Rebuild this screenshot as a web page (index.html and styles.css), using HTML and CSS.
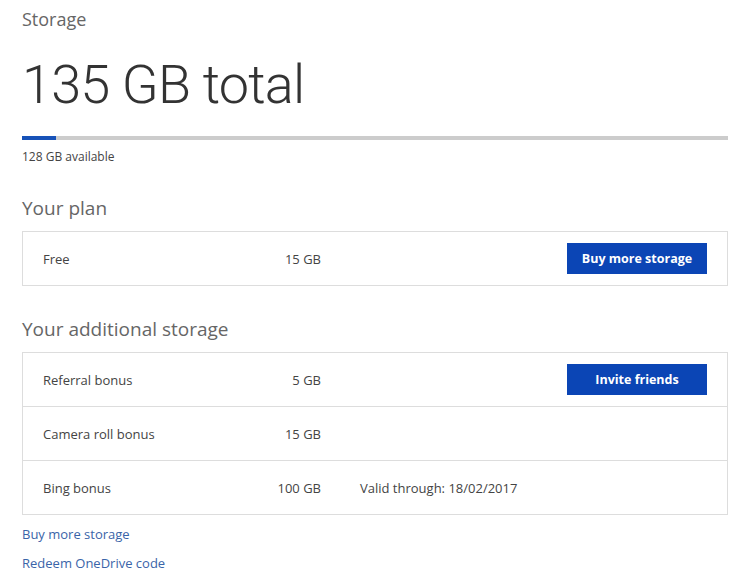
FILE: index.html
```html
<!DOCTYPE html>
<html>
	<head>
		<meta charset="UTF-8">
		<title>Storage</title>
		<link rel="stylesheet" href="styles.css">
	</head>
	<body>
		<div id="storage">
			<h2 class="label">Storage</h2>
			<h1 class="total">135 GB total</h1>
			<div class="bar"><div class="used" style="width: 4.8%"></div></div>
			<p class="avail">128 GB available</p>

			<h3 class="section">Your plan</h3>
			<div class="box">
				<div class="row">
					<span class="name">Free</span>
					<span class="size">15 GB</span>
					<span class="note"></span>
					<a class="btn" href="#">Buy more storage</a>
				</div>
			</div>

			<h3 class="section">Your additional storage</h3>
			<div class="box">
				<div class="row">
					<span class="name">Referral bonus</span>
					<span class="size">5 GB</span>
					<span class="note"></span>
					<a class="btn" href="#">Invite friends</a>
				</div>
				<div class="row">
					<span class="name">Camera roll bonus</span>
					<span class="size">15 GB</span>
					<span class="note"></span>
				</div>
				<div class="row">
					<span class="name">Bing bonus</span>
					<span class="size">100 GB</span>
					<span class="note">Valid through: 18/02/2017</span>
				</div>
			</div>

			<div class="links">
				<a href="#">Buy more storage</a>
				<a href="#">Redeem OneDrive code</a>
			</div>
		</div>
	</body>
</html>
```

FILE: styles.css
```css
* {
	margin: 0;
	padding: 0;
}
body {
	background: #fff;
	font-family: "Open Sans", "Noto Sans", sans-serif;
	color: #444;
}
#storage {
	width: 706px;
	padding: 6px 0 0 22px;
}
.label {
	font-size: 18px;
	font-weight: 400;
	color: #666;
	line-height: 26px;
}
.total {
	font-family: Roboto, "Open Sans", sans-serif;
	font-size: 54px;
	font-weight: 300;
	color: #333;
	line-height: 80px;
	margin-top: 13px;
	letter-spacing: -0.8px;
}
.bar {
	height: 4px;
	background-color: #ccc;
	margin-top: 11px;
}
.used {
	height: 100%;
	background-color: #1752b8;
}
.avail {
	font-size: 12px;
	line-height: 16px;
	margin-top: 9px;
	color: #444;
}
.section {
	font-size: 19px;
	font-weight: 400;
	color: #666;
	line-height: 26px;
	margin-top: 30px;
	margin-bottom: 10px;
}
.box {
	border: 1px solid #ddd;
}
.box + .section {
	margin-top: 30px;
}
.row {
	display: flex;
	align-items: center;
	height: 53px;
	padding: 0 20px;
	font-size: 13px;
}
.row + .row {
	border-top: 1px solid #ddd;
}
.name {
	width: 200px;
}
.size {
	width: 78px;
	text-align: right;
}
.note {
	flex: 1;
	margin-left: 39px;
}
.btn {
	display: inline-block;
	width: 140px;
	height: 31px;
	line-height: 31px;
	background-color: #0b45b5;
	color: #fff;
	font-weight: 700;
	font-size: 12.5px;
	text-align: center;
	text-decoration: none;
}
.links {
	margin-top: 5px;
}
.links a {
	display: block;
	font-size: 13px;
	line-height: 29px;
	color: #3a64a8;
	text-decoration: none;
}
```
